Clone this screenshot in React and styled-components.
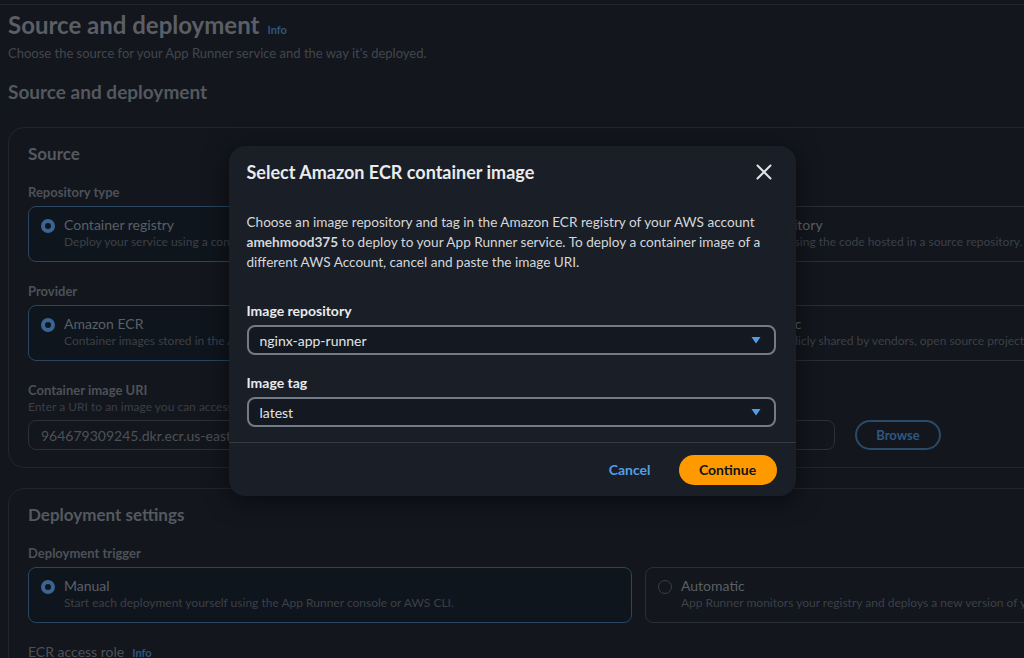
import React from 'react';
import styled, { createGlobalStyle } from 'styled-components';

const GlobalStyle = createGlobalStyle`
  html, body {
    margin: 0;
    padding: 0;
    background: #13161d;
    overflow: hidden;
  }
  body {
    font-family: Lato, "Noto Sans", Arial, sans-serif;
  }
  * { box-sizing: border-box; }
`;

const Page = styled.div`
  width: 1024px;
  height: 658px;
  overflow: hidden;
  position: relative;
`;

const TopRule = styled.div`
  height: 5px;
  border-bottom: 1px solid #22262d;
`;

const Content = styled.div`
  padding: 5px 0 0 8px;
  width: 1300px;
`;

const TitleRow = styled.div`
  display: flex;
  align-items: baseline;
  gap: 8px;
`;

const PageTitle = styled.h1`
  margin: 0;
  font-size: 24px;
  line-height: 30px;
  font-weight: 700;
  color: #5b5f65;
`;

const InfoLink = styled.span`
  font-size: 11px;
  font-weight: 700;
  color: #2f577f;
`;

const Subtitle = styled.p`
  margin: 4px 0 0;
  font-size: 13px;
  line-height: 18px;
  color: #42464d;
`;

const SectionHeading = styled.h2`
  margin: 18px 0 23px;
  font-size: 19px;
  line-height: 24px;
  font-weight: 700;
  color: #55595f;
`;

const Card = styled.section`
  border: 1px solid #22262d;
  border-radius: 16px;
  padding: 15px 19px 17px;
  margin-bottom: 20px;
`;

const CardTitle = styled.h3`
  margin: 0 0 18px;
  font-size: 17px;
  line-height: 22px;
  font-weight: 700;
  color: #55595f;
`;

const FieldLabel = styled.div`
  font-size: 13px;
  line-height: 18px;
  font-weight: 700;
  color: #4d5157;
  margin-bottom: ${p => (p.$tight ? 0 : 5)}px;
  display: flex;
  align-items: baseline;
  gap: 8px;
`;

const PlainLabel = styled(FieldLabel)`
  font-weight: 400;
  font-size: 14px;
`;

const FieldDesc = styled.div`
  font-size: 12px;
  line-height: 16px;
  color: #3b3f46;
  margin-bottom: 5px;
`;

const TileGrid = styled.div`
  display: grid;
  grid-template-columns: 604px 604px;
  gap: 13px;
  margin-bottom: 20px;
`;

const Tile = styled.div`
  height: 56px;
  border: 1px solid ${p => (p.$selected ? '#2a4660' : '#2a2e35')};
  background: ${p => (p.$selected ? '#0f151d' : 'transparent')};
  border-radius: 8px;
  padding: 9px 14px 0 12px;
  display: flex;
  gap: 9px;
  white-space: nowrap;
  overflow: hidden;
`;

const Radio = styled.span`
  flex: none;
  margin-top: 3px;
  width: 14px;
  height: 14px;
  border-radius: 50%;
  ${p =>
    p.$checked
      ? `background: #0f151d; border: 4px solid #3a6592;`
      : `border: 1.5px solid #3a3e45;`}
`;

const TileText = styled.div`
  display: flex;
  flex-direction: column;
`;

const TileTitle = styled.span`
  font-size: 14px;
  line-height: 18px;
  color: #5b5f66;
`;

const TileDesc = styled.span`
  font-size: 12px;
  line-height: 16px;
  color: #3c4047;
`;

const UriRow = styled.div`
  display: flex;
  gap: 20px;
  align-items: center;
`;

const TextInput = styled.div`
  width: 807px;
  height: 30px;
  border: 1px solid #2c3037;
  border-radius: 8px;
  padding: 0 12px;
  display: flex;
  align-items: center;
  font-size: 14px;
  color: #4d5157;
  white-space: nowrap;
  overflow: hidden;
`;

const OutlineButton = styled.div`
  width: 86px;
  height: 30px;
  border: 2px solid #2a4a6a;
  border-radius: 16px;
  display: flex;
  align-items: center;
  justify-content: center;
  font-size: 13px;
  font-weight: 700;
  color: #2f5880;
`;

const Overlay = styled.div`
  position: absolute;
  inset: 0;
  display: flex;
  justify-content: center;
  align-items: flex-start;
  padding-top: 146px;
`;

const Modal = styled.div`
  width: 567px;
  height: 350px;
  background: #1a1e26;
  border-radius: 16px;
  box-shadow: 0 4px 24px rgba(0, 0, 0, 0.55);
  display: flex;
  flex-direction: column;
`;

const ModalHeader = styled.div`
  display: flex;
  align-items: center;
  justify-content: space-between;
  padding: 14px 20px 0 18px;
`;

const ModalTitle = styled.h2`
  margin: 0;
  font-size: 18px;
  line-height: 24px;
  font-weight: 700;
  color: #e9ebed;
`;

const CloseButton = styled.button`
  background: none;
  border: none;
  padding: 0;
  width: 24px;
  height: 24px;
  display: flex;
  align-items: center;
  justify-content: center;
`;

const ModalBody = styled.div`
  padding: 28px 20px 0 18px;
  flex: 1;
`;

const BodyText = styled.p`
  margin: 0 0 29px;
  font-size: 13.6px;
  line-height: 20px;
  color: #d4d7db;
`;

const ModalLabel = styled.div`
  font-size: 14px;
  line-height: 20px;
  font-weight: 700;
  color: #e9ebed;
  margin-bottom: 4px;
`;

const Select = styled.div`
  height: 30px;
  border: 2px solid #737b86;
  border-radius: 8px;
  background: #141820;
  padding: 0 12px 0 11px;
  display: flex;
  align-items: center;
  justify-content: space-between;
  font-size: 14px;
  color: #e1e4e7;
  margin-bottom: ${p => p.$gap || 0}px;
`;

const ModalFooter = styled.div`
  border-top: 1px solid #353a43;
  height: 54px;
  padding: 0 19px 0 18px;
  display: flex;
  align-items: center;
  justify-content: flex-end;
  gap: 8px;
`;

const LinkButton = styled.button`
  background: none;
  border: none;
  padding: 4px 20px;
  font-family: inherit;
  font-size: 14px;
  font-weight: 700;
  color: #539fe5;
`;

const PrimaryButton = styled.button`
  width: 98px;
  height: 30px;
  border: none;
  border-radius: 16px;
  background: #ff9900;
  font-family: inherit;
  font-size: 14px;
  font-weight: 700;
  color: #0f141a;
`;

const Caret = () => (
  <svg width="12" height="10" viewBox="0 0 12 10">
    <path d="M1.5 2h9L6 8.5z" fill="#539fe5" />
  </svg>
);

const CloseIcon = () => (
  <svg width="16" height="16" viewBox="0 0 16 16">
    <path d="M1.5 1.5l13 13M14.5 1.5l-13 13" stroke="#e1e4e7" strokeWidth="2" strokeLinecap="round" />
  </svg>
);

const RadioTile = ({ selected, title, desc }) => (
  <Tile $selected={selected}>
    <Radio $checked={selected} />
    <TileText>
      <TileTitle>{title}</TileTitle>
      <TileDesc>{desc}</TileDesc>
    </TileText>
  </Tile>
);

export default function App() {
  return (
    <Page>
      <GlobalStyle />
      <TopRule />
      <Content>
        <TitleRow>
          <PageTitle>Source and deployment</PageTitle>
          <InfoLink>Info</InfoLink>
        </TitleRow>
        <Subtitle>Choose the source for your App Runner service and the way it's deployed.</Subtitle>
        <SectionHeading>Source and deployment</SectionHeading>

        <Card>
          <CardTitle>Source</CardTitle>
          <FieldLabel>Repository type</FieldLabel>
          <TileGrid>
            <RadioTile selected title="Container registry" desc="Deploy your service using a container image stored in a container registry." />
            <RadioTile title="Source code repository" desc="Deploy your service using the code hosted in a source repository." />
          </TileGrid>
          <FieldLabel>Provider</FieldLabel>
          <TileGrid>
            <RadioTile selected title="Amazon ECR" desc="Container images stored in the Amazon Elastic Container Registry." />
            <RadioTile title="Amazon ECR Public" desc="Container images publicly shared by vendors, open source projects and individuals." />
          </TileGrid>
          <FieldLabel $tight>Container image URI</FieldLabel>
          <FieldDesc>Enter a URI to an image you can access in Amazon ECR.</FieldDesc>
          <UriRow>
            <TextInput>964679309245.dkr.ecr.us-east-1.amazonaws.com/nginx-app-runner:latest</TextInput>
            <OutlineButton>Browse</OutlineButton>
          </UriRow>
        </Card>

        <Card>
          <CardTitle>Deployment settings</CardTitle>
          <FieldLabel>Deployment trigger</FieldLabel>
          <TileGrid>
            <RadioTile selected title="Manual" desc="Start each deployment yourself using the App Runner console or AWS CLI." />
            <RadioTile title="Automatic" desc="App Runner monitors your registry and deploys a new version of your service for each image push." />
          </TileGrid>
          <PlainLabel>
            ECR access role <InfoLink>Info</InfoLink>
          </PlainLabel>
        </Card>
      </Content>

      <Overlay>
        <Modal>
          <ModalHeader>
            <ModalTitle>Select Amazon ECR container image</ModalTitle>
            <CloseButton aria-label="Close">
              <CloseIcon />
            </CloseButton>
          </ModalHeader>
          <ModalBody>
            <BodyText>
              Choose an image repository and tag in the Amazon ECR registry of your AWS account{' '}
              <b>amehmood375</b> to deploy to your App Runner service. To deploy a container image of a
              different AWS Account, cancel and paste the image URI.
            </BodyText>
            <ModalLabel>Image repository</ModalLabel>
            <Select $gap={18}>
              nginx-app-runner
              <Caret />
            </Select>
            <ModalLabel>Image tag</ModalLabel>
            <Select>
              latest
              <Caret />
            </Select>
          </ModalBody>
          <ModalFooter>
            <LinkButton>Cancel</LinkButton>
            <PrimaryButton>Continue</PrimaryButton>
          </ModalFooter>
        </Modal>
      </Overlay>
    </Page>
  );
}
